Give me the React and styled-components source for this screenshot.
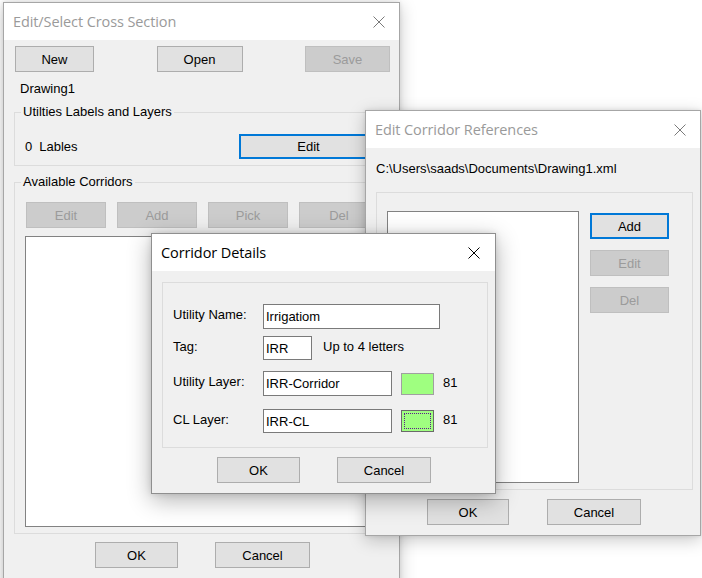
import React from "react";
import styled, { createGlobalStyle } from "styled-components";

const Global = createGlobalStyle`
  html, body { margin: 0; padding: 0; background: #ffffff; }
  body { width: 702px; height: 578px; overflow: hidden; position: relative;
    font-family: "Liberation Sans", Arial, sans-serif; font-size: 13px; color: #000; }
  * { box-sizing: border-box; }
`;

const Desktop = styled.div`
  position: relative;
  width: 702px;
  height: 578px;
  overflow: hidden;
  background: #ffffff;
`;

const Window = styled.div`
  position: absolute;
  left: ${(p) => p.$x}px;
  top: ${(p) => p.$y}px;
  width: ${(p) => p.$w}px;
  height: ${(p) => p.$h}px;
  border: 1px solid ${(p) => (p.$active ? "#8f8f8f" : "#a6a6a6")};
  background: #f0f0f0;
  display: flex;
  flex-direction: column;
  box-shadow: ${(p) =>
    p.$active
      ? "0 6px 22px rgba(0,0,0,0.30), 0 0 6px rgba(0,0,0,0.12)"
      : "0 4px 16px rgba(0,0,0,0.22), 0 0 4px rgba(0,0,0,0.10)"};
`;

const TitleBar = styled.div`
  height: 37px;
  flex: none;
  background: #ffffff;
  display: flex;
  align-items: center;
  justify-content: space-between;
  padding: 0 ${(p) => p.$pr || 14}px 0 9px;
`;

const Title = styled.span`
  font-family: "Open Sans", "Noto Sans", sans-serif;
  font-size: 14.5px;
  color: ${(p) => (p.$active ? "#000" : "#9a9a9a")};
  letter-spacing: -0.1px;
`;

const CloseIcon = ({ active }) => (
  <svg width="12" height="12" viewBox="0 0 12 12">
    <path
      d="M0.5 0.5 L11.5 11.5 M11.5 0.5 L0.5 11.5"
      stroke={active ? "#000" : "#7a7a7a"}
      strokeWidth="1"
      fill="none"
    />
  </svg>
);

const Body = styled.div`
  flex: 1;
  display: flex;
  flex-direction: column;
  padding: ${(p) => p.$pad || "0"};
`;

const Button = styled.button`
  font-family: "Liberation Sans", Arial, sans-serif;
  font-size: 13px;
  width: ${(p) => p.$w}px;
  height: ${(p) => p.$h || 26}px;
  flex: none;
  padding: 0;
  margin: 0;
  background: ${(p) => (p.disabled ? "#cccccc" : "#e1e1e1")};
  color: ${(p) => (p.disabled ? "#9b9b9b" : "#000")};
  border: ${(p) => (p.$focus ? "2px solid #0078d7" : `1px solid ${p.disabled ? "#bfbfbf" : "#adadad"}`)};
  border-radius: 0;
  display: flex;
  align-items: center;
  justify-content: center;
`;

const ButtonRow = styled.div`
  display: flex;
  align-items: center;
  justify-content: ${(p) => p.$justify || "flex-start"};
  gap: ${(p) => p.$gap || 0}px;
  margin: ${(p) => p.$margin || "0"};
  padding: ${(p) => p.$pad || "0"};
`;

const Text = styled.div`
  line-height: 16px;
  height: 16px;
  white-space: nowrap;
  margin: ${(p) => p.$margin || "0"};
`;

const Group = styled.fieldset`
  margin: ${(p) => p.$margin || "0"};
  width: ${(p) => p.$w}px;
  height: ${(p) => (p.$h ? `${p.$h}px` : "auto")};
  border: 1px solid #dcdcdc;
  padding: ${(p) => p.$pad || "0"};
  min-width: 0;
  display: flex;
  flex-direction: ${(p) => p.$dir || "column"};
`;

const Legend = styled.legend`
  margin-left: -4px;
  padding: 0 2px;
  line-height: 16px;
  font-size: 13px;
`;

const ListBox = styled.div`
  background: #ffffff;
  border: 1px solid #828282;
  width: ${(p) => p.$w}px;
  height: ${(p) => p.$h}px;
  margin: ${(p) => p.$margin || "0"};
  flex: none;
`;

const ButtonColumn = styled.div`
  display: flex;
  flex-direction: column;
  gap: 11px;
  margin: 2px 0 0 11px;
`;

const FormRow = styled.div`
  display: flex;
  align-items: center;
  margin-top: ${(p) => p.$mt || 0}px;
`;

const FieldLabel = styled.div`
  width: 90px;
  flex: none;
  line-height: 16px;
  margin-top: -3px;
`;

const Input = styled.div`
  width: ${(p) => p.$w}px;
  height: ${(p) => p.$h || 24}px;
  flex: none;
  background: #fff;
  border: 1px solid #7a7a7a;
  padding: 0 2px;
  display: flex;
  align-items: center;
  white-space: nowrap;
`;

const Swatch = styled.div`
  position: relative;
  width: 33px;
  height: 22px;
  flex: none;
  margin-left: 9px;
  background: #9fff80;
  border: 1px solid ${(p) => (p.$focus ? "#6a6a6a" : "#a0a0a0")};
  &::after {
    content: "";
    display: ${(p) => (p.$focus ? "block" : "none")};
    position: absolute;
    inset: 2px;
    border: 1px dotted #5b1d8a;
  }
`;

const Hint = styled.span`
  margin-left: ${(p) => p.$ml || 9}px;
  margin-top: -3px;
  white-space: nowrap;
`;

export default function App() {
  return (
    <Desktop>
      <Global />
      {/* Edit/Select Cross Section */}
      <Window $x={3} $y={2} $w={397} $h={590}>
        <TitleBar>
          <Title>Edit/Select Cross Section</Title>
          <CloseIcon />
        </TitleBar>
        <Body $pad="6px 0 0 0">
          <ButtonRow $justify="space-between" $margin="0 9px 0 11px">
            <Button $w={79}>New</Button>
            <Button $w={86}>Open</Button>
            <Button $w={85} disabled>Save</Button>
          </ButtonRow>
          <Text $margin="9px 0 0 16px">Drawing1</Text>
          <Group $w={375} $margin="7px 0 0 10px" $pad="14px 0 6px 10px">
            <Legend>Utilties Labels and Layers</Legend>
            <ButtonRow>
              <Text $margin="0 7px 0 0">0</Text>
              <Text>Lables</Text>
              <Button $w={139} $h={25} $focus style={{ marginLeft: "auto", marginRight: 10 }}>
                Edit
              </Button>
            </ButtonRow>
          </Group>
          <Group $w={375} $margin="0 0 0 10px" $pad="12px 9px 6px 10px" style={{ marginTop: 8 }}>
            <Legend>Available Corridors</Legend>
            <ButtonRow $gap={11} $margin="0 0 0 1px">
              <Button $w={80} disabled>Edit</Button>
              <Button $w={80} disabled>Add</Button>
              <Button $w={80} disabled>Pick</Button>
              <Button $w={80} disabled>Del</Button>
            </ButtonRow>
            <ListBox $w={354} $h={291} $margin="8px 0 0 0" />
          </Group>
          <ButtonRow $gap={37} $margin="8px 0 0 91px">
            <Button $w={83}>OK</Button>
            <Button $w={95}>Cancel</Button>
          </ButtonRow>
        </Body>
      </Window>

      {/* Edit Corridor References */}
      <Window $x={365} $y={110} $w={336} $h={426}>
        <TitleBar>
          <Title>Edit Corridor References</Title>
          <CloseIcon />
        </TitleBar>
        <Body $pad="13px 0 0 0">
          <Text $margin="0 0 0 10px">C:\Users\saads\Documents\Drawing1.xml</Text>
          <Group $w={317} $h={298} $dir="row" $margin="15px 0 0 10px" $pad="18px 0 6px 10px">
            <ListBox $w={192} $h={272} />
            <ButtonColumn>
              <Button $w={79} $focus>Add</Button>
              <Button $w={79} disabled>Edit</Button>
              <Button $w={79} disabled>Del</Button>
            </ButtonColumn>
          </Group>
          <ButtonRow $gap={38} $margin="9px 0 0 61px">
            <Button $w={82}>OK</Button>
            <Button $w={94}>Cancel</Button>
          </ButtonRow>
        </Body>
      </Window>

      {/* Corridor Details */}
      <Window $x={151} $y={233} $w={345} $h={261} $active>
        <TitleBar $pr={15}>
          <Title $active>Corridor Details</Title>
          <CloseIcon active />
        </TitleBar>
        <Body $pad="11px 0 0 0">
          <Group $w={326} $h={166} $margin="0 0 0 10px" $pad="21px 0 0 10px">
            <FormRow>
              <FieldLabel>Utility Name:</FieldLabel>
              <Input $w={177} $h={25}>Irrigatiom</Input>
            </FormRow>
            <FormRow $mt={7}>
              <FieldLabel>Tag:</FieldLabel>
              <Input $w={49}>IRR</Input>
              <Hint $ml={11}>Up to 4 letters</Hint>
            </FormRow>
            <FormRow $mt={11}>
              <FieldLabel>Utility Layer:</FieldLabel>
              <Input $w={129} $h={25}>IRR-Corridor</Input>
              <Swatch />
              <Hint>81</Hint>
            </FormRow>
            <FormRow $mt={13}>
              <FieldLabel>CL Layer:</FieldLabel>
              <Input $w={129}>IRR-CL</Input>
              <Swatch $focus />
              <Hint>81</Hint>
            </FormRow>
          </Group>
          <ButtonRow $gap={37} $margin="9px 0 0 65px">
            <Button $w={83}>OK</Button>
            <Button $w={94}>Cancel</Button>
          </ButtonRow>
        </Body>
      </Window>
    </Desktop>
  );
}
